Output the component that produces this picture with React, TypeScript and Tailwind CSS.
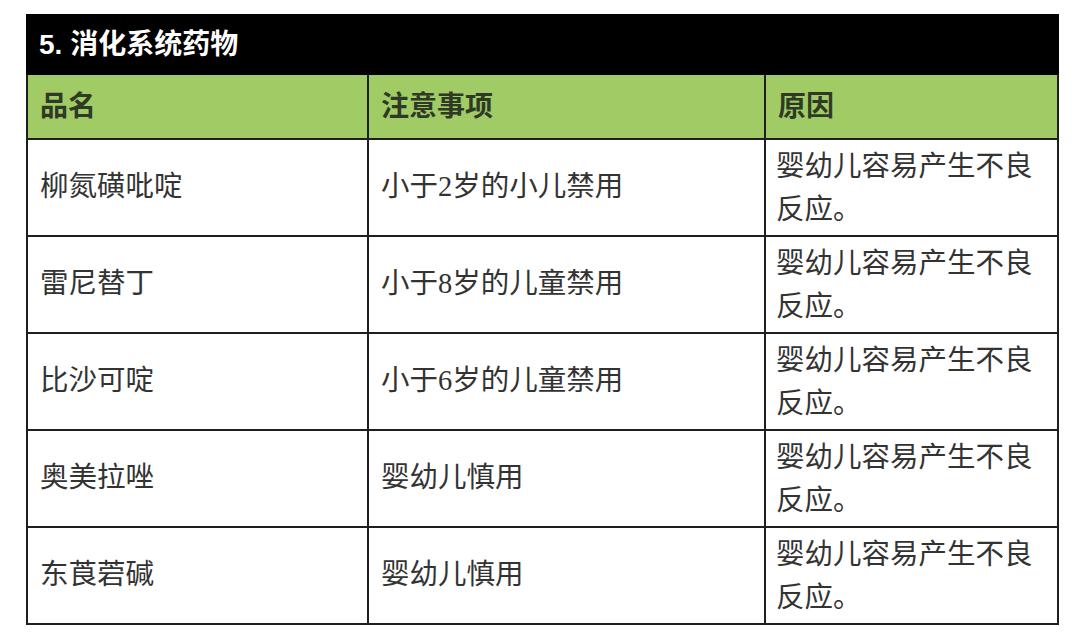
const rows = [
  { name: "柳氮磺吡啶", note: "小于2岁的小儿禁用" },
  { name: "雷尼替丁", note: "小于8岁的儿童禁用" },
  { name: "比沙可啶", note: "小于6岁的儿童禁用" },
  { name: "奥美拉唑", note: "婴幼儿慎用" },
  { name: "东莨菪碱", note: "婴幼儿慎用" },
];

const serif = "font-['Liberation_Serif','Noto_Sans_CJK_SC',serif]";

export default function App() {
  return (
    <div className="min-h-screen bg-white pt-[14px] pl-[26px]">
      <table className="w-[1031px] table-fixed border-collapse">
        <colgroup>
          <col className="w-[341px]" />
          <col className="w-[397px]" />
          <col className="w-[293px]" />
        </colgroup>
        <thead>
          <tr className="h-[59px] bg-black">
            <th
              colSpan={3}
              className="border-2 border-black px-[11px] text-left align-middle font-['Liberation_Sans','Noto_Sans_CJK_SC',sans-serif] text-[28px] font-bold text-white"
            >
              5. 消化系统药物
            </th>
          </tr>
          <tr className={`h-[65px] bg-[#a1cb65] ${serif} text-[28px] font-bold text-[#2f3a26]`}>
            <th className="border-2 border-[#1f1f1f] px-[12px] text-left">品名</th>
            <th className="border-2 border-[#1f1f1f] px-[12px] text-left">注意事项</th>
            <th className="border-2 border-[#1f1f1f] px-[12px] text-left">原因</th>
          </tr>
        </thead>
        <tbody className={`${serif} text-[28.5px] text-[#333333]`}>
          {rows.map((r) => (
            <tr key={r.name} className="h-[97px]">
              <td className="border-2 border-[#1f1f1f] px-[12px] align-middle">{r.name}</td>
              <td className="border-2 border-[#1f1f1f] px-[12px] align-middle">{r.note}</td>
              <td className="border-2 border-[#1f1f1f] px-[10px] align-middle leading-[43px]">
                婴幼儿容易产生不良反应。
              </td>
            </tr>
          ))}
        </tbody>
      </table>
    </div>
  );
}
